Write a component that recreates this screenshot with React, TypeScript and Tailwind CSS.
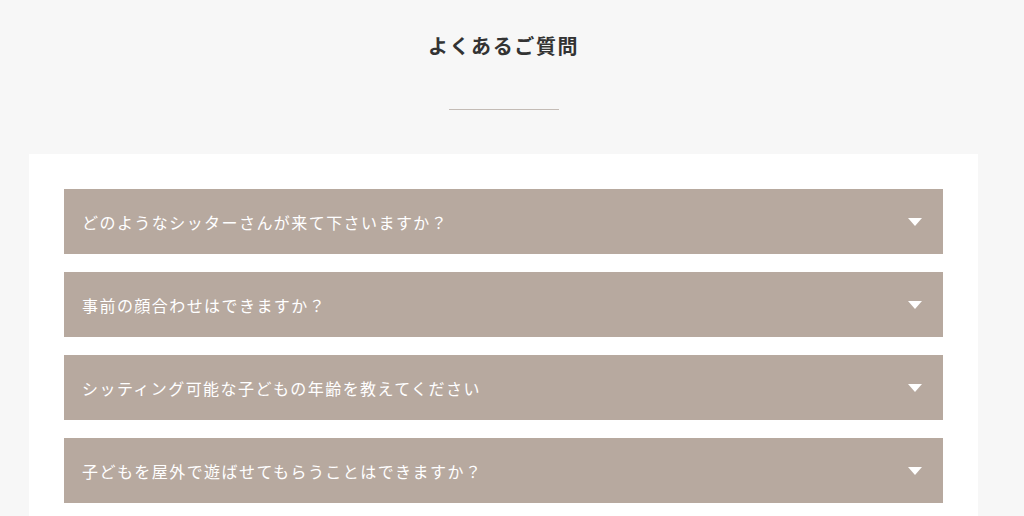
const faqs = [
  "どのようなシッターさんが来て下さいますか？",
  "事前の顔合わせはできますか？",
  "シッティング可能な子どもの年齢を教えてください",
  "子どもを屋外で遊ばせてもらうことはできますか？",
];

export default function App() {
  return (
    <div
      className="min-h-screen bg-[#f7f7f7] text-[#333]"
      style={{ fontFamily: '"Noto Sans CJK JP", "Noto Sans", sans-serif' }}
    >
      <div className="w-[1007px]">
        <div className="flex flex-col items-center pt-[30px]">
          <h2 className="text-[20px] font-bold leading-[32px] tracking-[0.08em] text-[#333]">
            よくあるご質問
          </h2>
          <div className="mt-[47px] h-px w-[110px] bg-[#c4bcb6]" />
        </div>

        <div className="mx-[29px] mt-[44px] bg-white px-[35px] pt-[35px] pb-[35px]">
          <div className="flex flex-col gap-[18px]">
            {faqs.map((q) => (
              <button
                key={q}
                className="flex h-[65px] w-full items-center justify-between bg-[#b7a99f] pl-[18px] pr-[21px] text-left"
              >
                <span className="text-[16px] tracking-[0.09em] text-white">{q}</span>
                <svg width="14" height="8" viewBox="0 0 14 8">
                  <path d="M0 0 H14 L7 8 Z" fill="#fff" />
                </svg>
              </button>
            ))}
          </div>
        </div>
      </div>
    </div>
  );
}
